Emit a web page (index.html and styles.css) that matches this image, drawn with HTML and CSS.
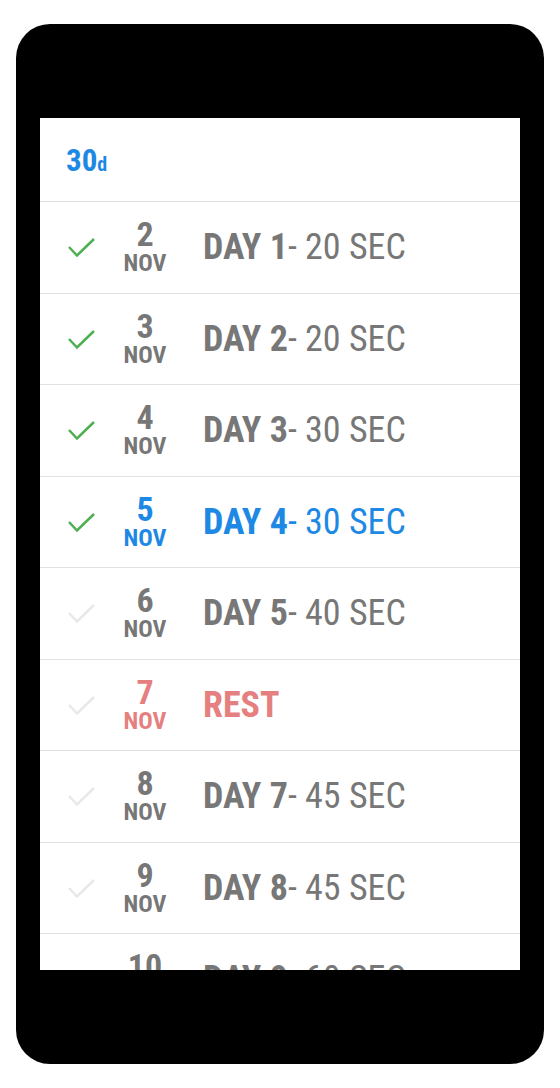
FILE: index.html
```html
<!DOCTYPE html>
<html>
<head>
<meta charset="utf-8">
<link rel="stylesheet" href="styles.css">
</head>
<body>
<div class="phone">
  <div class="screen">
    <div class="header"><span class="logo-num">30</span><span class="logo-d">d</span></div>
    <div class="list">
      <div class="row done">
        <svg class="check" viewBox="0 0 32 24"><polyline points="3,12 11,20.5 28,4"/></svg>
        <div class="date"><div class="num">2</div><div class="mon">NOV</div></div>
        <div class="title"><b>DAY 1</b>- 20 SEC</div>
      </div>
      <div class="row done">
        <svg class="check" viewBox="0 0 32 24"><polyline points="3,12 11,20.5 28,4"/></svg>
        <div class="date"><div class="num">3</div><div class="mon">NOV</div></div>
        <div class="title"><b>DAY 2</b>- 20 SEC</div>
      </div>
      <div class="row done">
        <svg class="check" viewBox="0 0 32 24"><polyline points="3,12 11,20.5 28,4"/></svg>
        <div class="date"><div class="num">4</div><div class="mon">NOV</div></div>
        <div class="title"><b>DAY 3</b>- 30 SEC</div>
      </div>
      <div class="row done current">
        <svg class="check" viewBox="0 0 32 24"><polyline points="3,12 11,20.5 28,4"/></svg>
        <div class="date"><div class="num">5</div><div class="mon">NOV</div></div>
        <div class="title"><b>DAY 4</b>- 30 SEC</div>
      </div>
      <div class="row">
        <svg class="check" viewBox="0 0 32 24"><polyline points="3,12 11,20.5 28,4"/></svg>
        <div class="date"><div class="num">6</div><div class="mon">NOV</div></div>
        <div class="title"><b>DAY 5</b>- 40 SEC</div>
      </div>
      <div class="row rest">
        <svg class="check" viewBox="0 0 32 24"><polyline points="3,12 11,20.5 28,4"/></svg>
        <div class="date"><div class="num">7</div><div class="mon">NOV</div></div>
        <div class="title"><b>REST</b></div>
      </div>
      <div class="row">
        <svg class="check" viewBox="0 0 32 24"><polyline points="3,12 11,20.5 28,4"/></svg>
        <div class="date"><div class="num">8</div><div class="mon">NOV</div></div>
        <div class="title"><b>DAY 7</b>- 45 SEC</div>
      </div>
      <div class="row">
        <svg class="check" viewBox="0 0 32 24"><polyline points="3,12 11,20.5 28,4"/></svg>
        <div class="date"><div class="num">9</div><div class="mon">NOV</div></div>
        <div class="title"><b>DAY 8</b>- 45 SEC</div>
      </div>
      <div class="row">
        <svg class="check" viewBox="0 0 32 24"><polyline points="3,12 11,20.5 28,4"/></svg>
        <div class="date"><div class="num">10</div><div class="mon">NOV</div></div>
        <div class="title"><b>DAY 9</b>- 60 SEC</div>
      </div>
    </div>
  </div>
</div>
</body>
</html>
```

FILE: styles.css
```css
* { box-sizing: border-box; }
body {
  margin: 0;
  background: #fff;
  font-family: "Roboto Condensed", Roboto, "Liberation Sans", sans-serif;
}
.phone {
  width: 528px;
  height: 1040px;
  margin: 24px 16px;
  background: #000;
  border-radius: 34px;
  padding: 94px 24px;
}
.screen {
  width: 480px;
  height: 852px;
  background: #fff;
  overflow: hidden;
}
.header {
  height: 84px;
  border-bottom: 1px solid #e2e2e2;
  padding: 27px 0 0 26px;
  color: #1e88e5;
  font-weight: 700;
  line-height: 1;
}
.logo-num { font-size: 31px; }
.logo-d { font-size: 20px; }
.row {
  height: 91.5px;
  border-bottom: 1px solid #e2e2e2;
  display: flex;
  align-items: center;
  color: #777;
}
.check {
  width: 32px;
  height: 24px;
  margin-left: 26px;
  fill: none;
  stroke: #e8e8e8;
  stroke-width: 2.5;
}
.done .check { stroke: #4caf50; }
.date {
  width: 60px;
  margin-left: 17px;
  text-align: center;
  font-weight: 700;
  line-height: 1;
}
.num { font-size: 34px; margin-top: -2px; }
.mon { font-size: 24px; }
.title {
  margin-left: 28px;
  font-size: 36px;
  line-height: 1;
}
.title b { font-weight: 700; }
.current { color: #1e88e5; }
.rest { color: #e57f80; }
```
